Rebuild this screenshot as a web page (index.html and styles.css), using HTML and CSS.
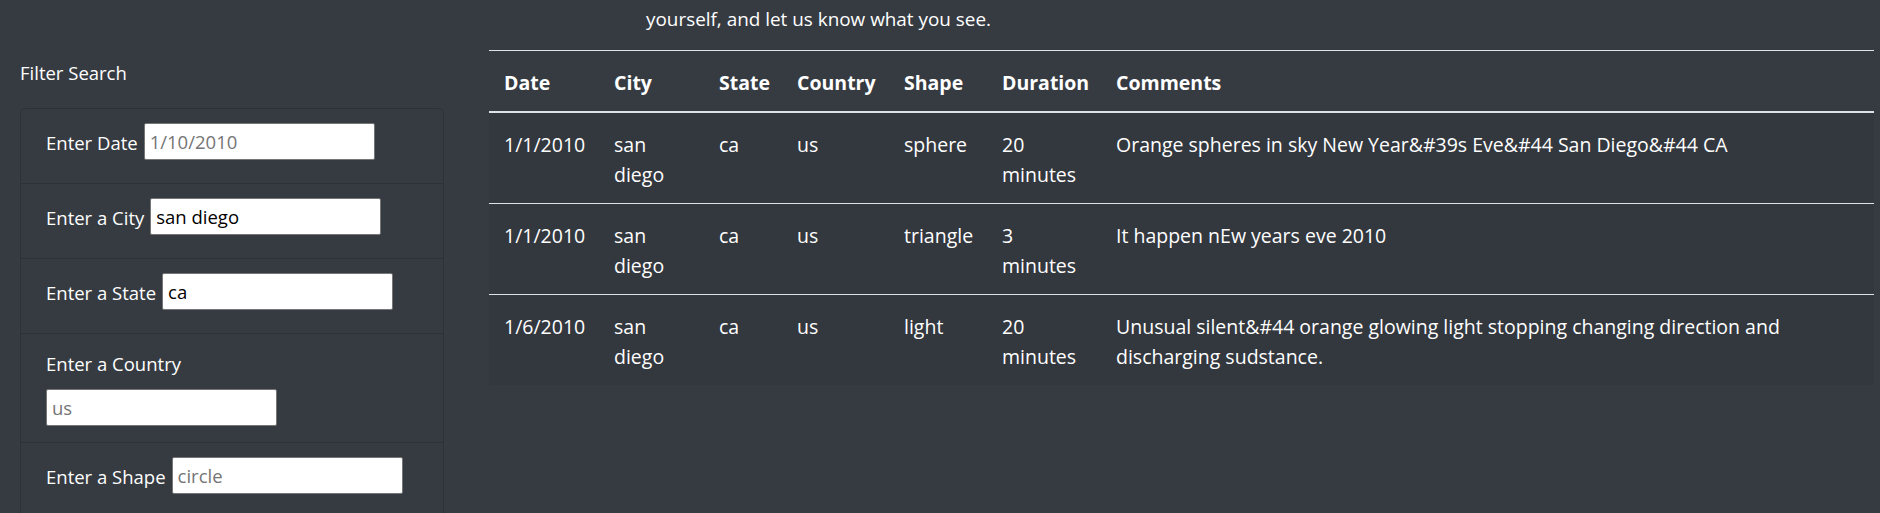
FILE: index.html
```html
<!DOCTYPE html>
<html lang="en">
<head>
<meta charset="utf-8">
<title>UFO Sightings</title>
<link rel="stylesheet" href="styles.css">
</head>
<body>
<div class="page">
  <aside class="sidebar">
    <p class="filter-title">Filter Search</p>
    <ul class="filters">
      <li class="filter"><label for="datetime">Enter Date</label><input id="datetime" type="text" placeholder="1/10/2010"></li>
      <li class="filter"><label for="city">Enter a City</label><input id="city" type="text" value="san diego"></li>
      <li class="filter"><label for="state">Enter a State</label><input id="state" type="text" value="ca"></li>
      <li class="filter filter--stacked"><label for="country">Enter a Country</label><input id="country" type="text" placeholder="us"></li>
      <li class="filter"><label for="shape">Enter a Shape</label><input id="shape" type="text" placeholder="circle"></li>
    </ul>
  </aside>
  <main class="content">
    <p class="intro">yourself, and let us know what you see.</p>
    <table class="ufo-table">
      <colgroup>
        <col class="c-date"><col class="c-city"><col class="c-state"><col class="c-country"><col class="c-shape"><col class="c-duration"><col class="c-comments">
      </colgroup>
      <thead>
        <tr><th>Date</th><th>City</th><th>State</th><th>Country</th><th>Shape</th><th>Duration</th><th>Comments</th></tr>
      </thead>
      <tbody>
        <tr><td>1/1/2010</td><td>san diego</td><td>ca</td><td>us</td><td>sphere</td><td>20 minutes</td><td>Orange spheres in sky New Year&amp;#39s Eve&amp;#44 San Diego&amp;#44 CA</td></tr>
        <tr><td>1/1/2010</td><td>san diego</td><td>ca</td><td>us</td><td>triangle</td><td>3 minutes</td><td>It happen nEw years eve 2010</td></tr>
        <tr><td>1/6/2010</td><td>san diego</td><td>ca</td><td>us</td><td>light</td><td>20 minutes</td><td>Unusual silent&amp;#44 orange glowing light stopping changing direction and discharging sudstance.</td></tr>
      </tbody>
    </table>
  </main>
</div>
</body>
</html>
```
FILE: styles.css
```css
html, body {
  margin: 0;
  padding: 0;
}

body {
  background: #363b42;
  color: #ffffff;
  font-family: "Open Sans", "Noto Sans", "Liberation Sans", sans-serif;
  font-size: 18.5px;
  line-height: 30px;
  overflow: hidden;
}

.page {
  display: flex;
  align-items: flex-start;
}

.sidebar {
  width: 469px;
  flex: 0 0 469px;
  box-sizing: border-box;
  padding-left: 20px;
}

.filter-title {
  margin: 58px 0 20px;
}

.filters {
  list-style: none;
  margin: 0;
  padding: 0;
  width: 424px;
  box-sizing: border-box;
  border: 1px solid rgba(0, 0, 0, 0.14);
  border-radius: 5px;
}

.filter {
  display: flex;
  align-items: center;
  gap: 6px;
  padding: 14px 25px 23px;
}

.filter + .filter {
  border-top: 1px solid rgba(0, 0, 0, 0.14);
}

.filter label {
  white-space: nowrap;
  padding-top: 2px;
}

.filter input {
  width: 231px;
  height: 37px;
  box-sizing: border-box;
  margin: 0;
  padding: 0 5px;
  border: 1px solid #767676;
  border-radius: 2px;
  background: #ffffff;
  color: #000000;
  font: inherit;
  line-height: normal;
}

.filter input::placeholder {
  color: #757575;
  opacity: 1;
}

.filter--stacked {
  display: block;
  padding: 15px 25px 16px;
}

.filter--stacked label {
  display: block;
  padding-top: 0;
  margin-bottom: 10px;
}

.filter--stacked input {
  display: block;
}

.content {
  flex: 1 1 auto;
  margin-left: 20px;
}

.intro {
  margin: 0;
  padding: 4px 0 0 157px;
  font-size: 18.9px;
}

.ufo-table {
  width: 1385px;
  margin-top: 16px;
  border-collapse: collapse;
  table-layout: fixed;
  font-size: 19.5px;
}

.c-date { width: 110px; }
.c-city { width: 105px; }
.c-state { width: 78px; }
.c-country { width: 107px; }
.c-shape { width: 98px; }
.c-duration { width: 114px; }
.c-comments { width: 773px; }

.ufo-table th,
.ufo-table td {
  padding: 17px 15px 13px;
  text-align: left;
  vertical-align: top;
}

.ufo-table thead th {
  font-weight: 700;
  border-top: 1px solid #dee2e6;
  border-bottom: 2px solid #dee2e6;
}

.ufo-table tbody {
  background: #33373e;
}

.ufo-table tbody td {
  border-top: 1px solid #dee2e6;
}
```
